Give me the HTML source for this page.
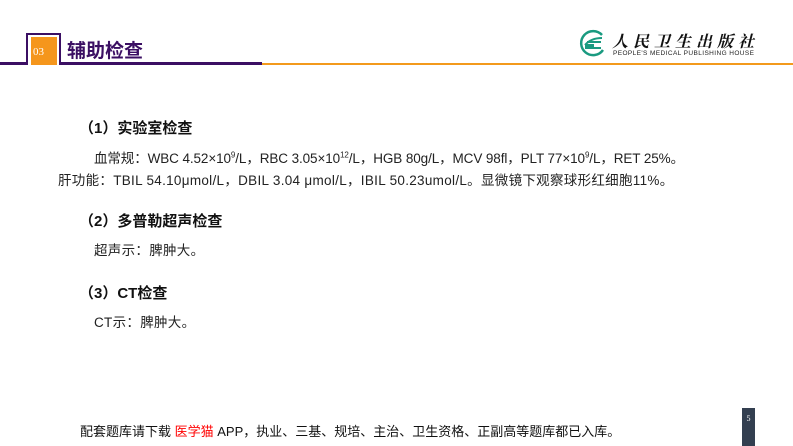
<!DOCTYPE html>
<html><head><meta charset="utf-8"><style>
*{margin:0;padding:0}
body{width:793px;height:446px;position:relative;background:#fff;font-family:"Liberation Sans","Noto Sans CJK SC",sans-serif;overflow:hidden;color:#111}
.a{position:absolute;white-space:nowrap}
.h{font-size:15px;font-weight:bold;color:#111}
.t{font-size:13.5px;color:#222;letter-spacing:0.3px}
</style></head><body>
<div class="a" style="left:0;top:62px;width:262px;height:3px;background:#3b0f63"></div>
<div class="a" style="left:262px;top:63px;width:531px;height:2px;background:#f39a1c"></div>
<div class="a" style="left:26px;top:33px;width:31px;height:30px;border:2px solid #3b0f63;border-bottom:none;background:#fff"></div>
<div class="a" style="left:31px;top:37px;width:26px;height:28px;background:#f5961c;color:#fff;font-family:'Liberation Serif',serif;font-size:11px;line-height:30px;padding-left:2px;box-sizing:border-box">03</div>
<div class="a" style="left:67px;top:36px;font-size:19px;font-weight:bold;color:#3b0f63">辅助检查</div>
<svg class="a" style="left:577px;top:28px" width="30" height="30" viewBox="0 0 30 30"><path d="M25 7 A12 12 0 1 0 26 22" fill="none" stroke="#1a9a80" stroke-width="2.5"/><path d="M8 17 Q14 10 25 10 M8 20 L24 20 M10 14 L24 14" stroke="#1a9a80" stroke-width="2" fill="none"/><rect x="8" y="16" width="9" height="4" fill="#1a9a80"/></svg>
<div class="a" style="left:612px;top:29px;font-size:16px;font-weight:bold;letter-spacing:5px;color:#111;font-family:'Noto Serif CJK SC',serif;font-style:italic">人民卫生出版社</div>
<div class="a" style="left:613px;top:50px;font-size:6.5px;color:#222;letter-spacing:0.4px">PEOPLE'S MEDICAL PUBLISHING HOUSE</div>
<div class="a h" style="left:79px;top:117px">（1）实验室检查</div>
<div class="a t" style="left:94px;top:147px;letter-spacing:-0.1px">血常规：WBC 4.52×10<sup style="font-size:8px">9</sup>/L，RBC 3.05×10<sup style="font-size:8px">12</sup>/L，HGB 80g/L，MCV 98fl，PLT 77×10<sup style="font-size:8px">9</sup>/L，RET 25%。</div>
<div class="a t" style="left:58px;top:169px">肝功能：TBIL 54.10μmol/L，DBIL 3.04 μmol/L，IBIL 50.23umol/L。显微镜下观察球形红细胞11%。</div>
<div class="a h" style="left:79px;top:210px">（2）多普勒超声检查</div>
<div class="a t" style="left:94px;top:239px">超声示：脾肿大。</div>
<div class="a h" style="left:79px;top:282px">（3）CT检查</div>
<div class="a t" style="left:94px;top:311px">CT示：脾肿大。</div>
<div class="a" style="left:80px;top:421px;color:#111;font-size:13px">配套题库请下载 <span style="color:#f00">医学猫</span> APP，执业、三基、规培、主治、卫生资格、正副高等题库都已入库。</div>
<div class="a" style="left:742px;top:408px;width:13px;height:38px;background:#333f50;color:#fff;font-family:'Liberation Serif',serif;font-size:8px;text-align:center;padding-top:6px;box-sizing:border-box">5</div>
</body></html>
